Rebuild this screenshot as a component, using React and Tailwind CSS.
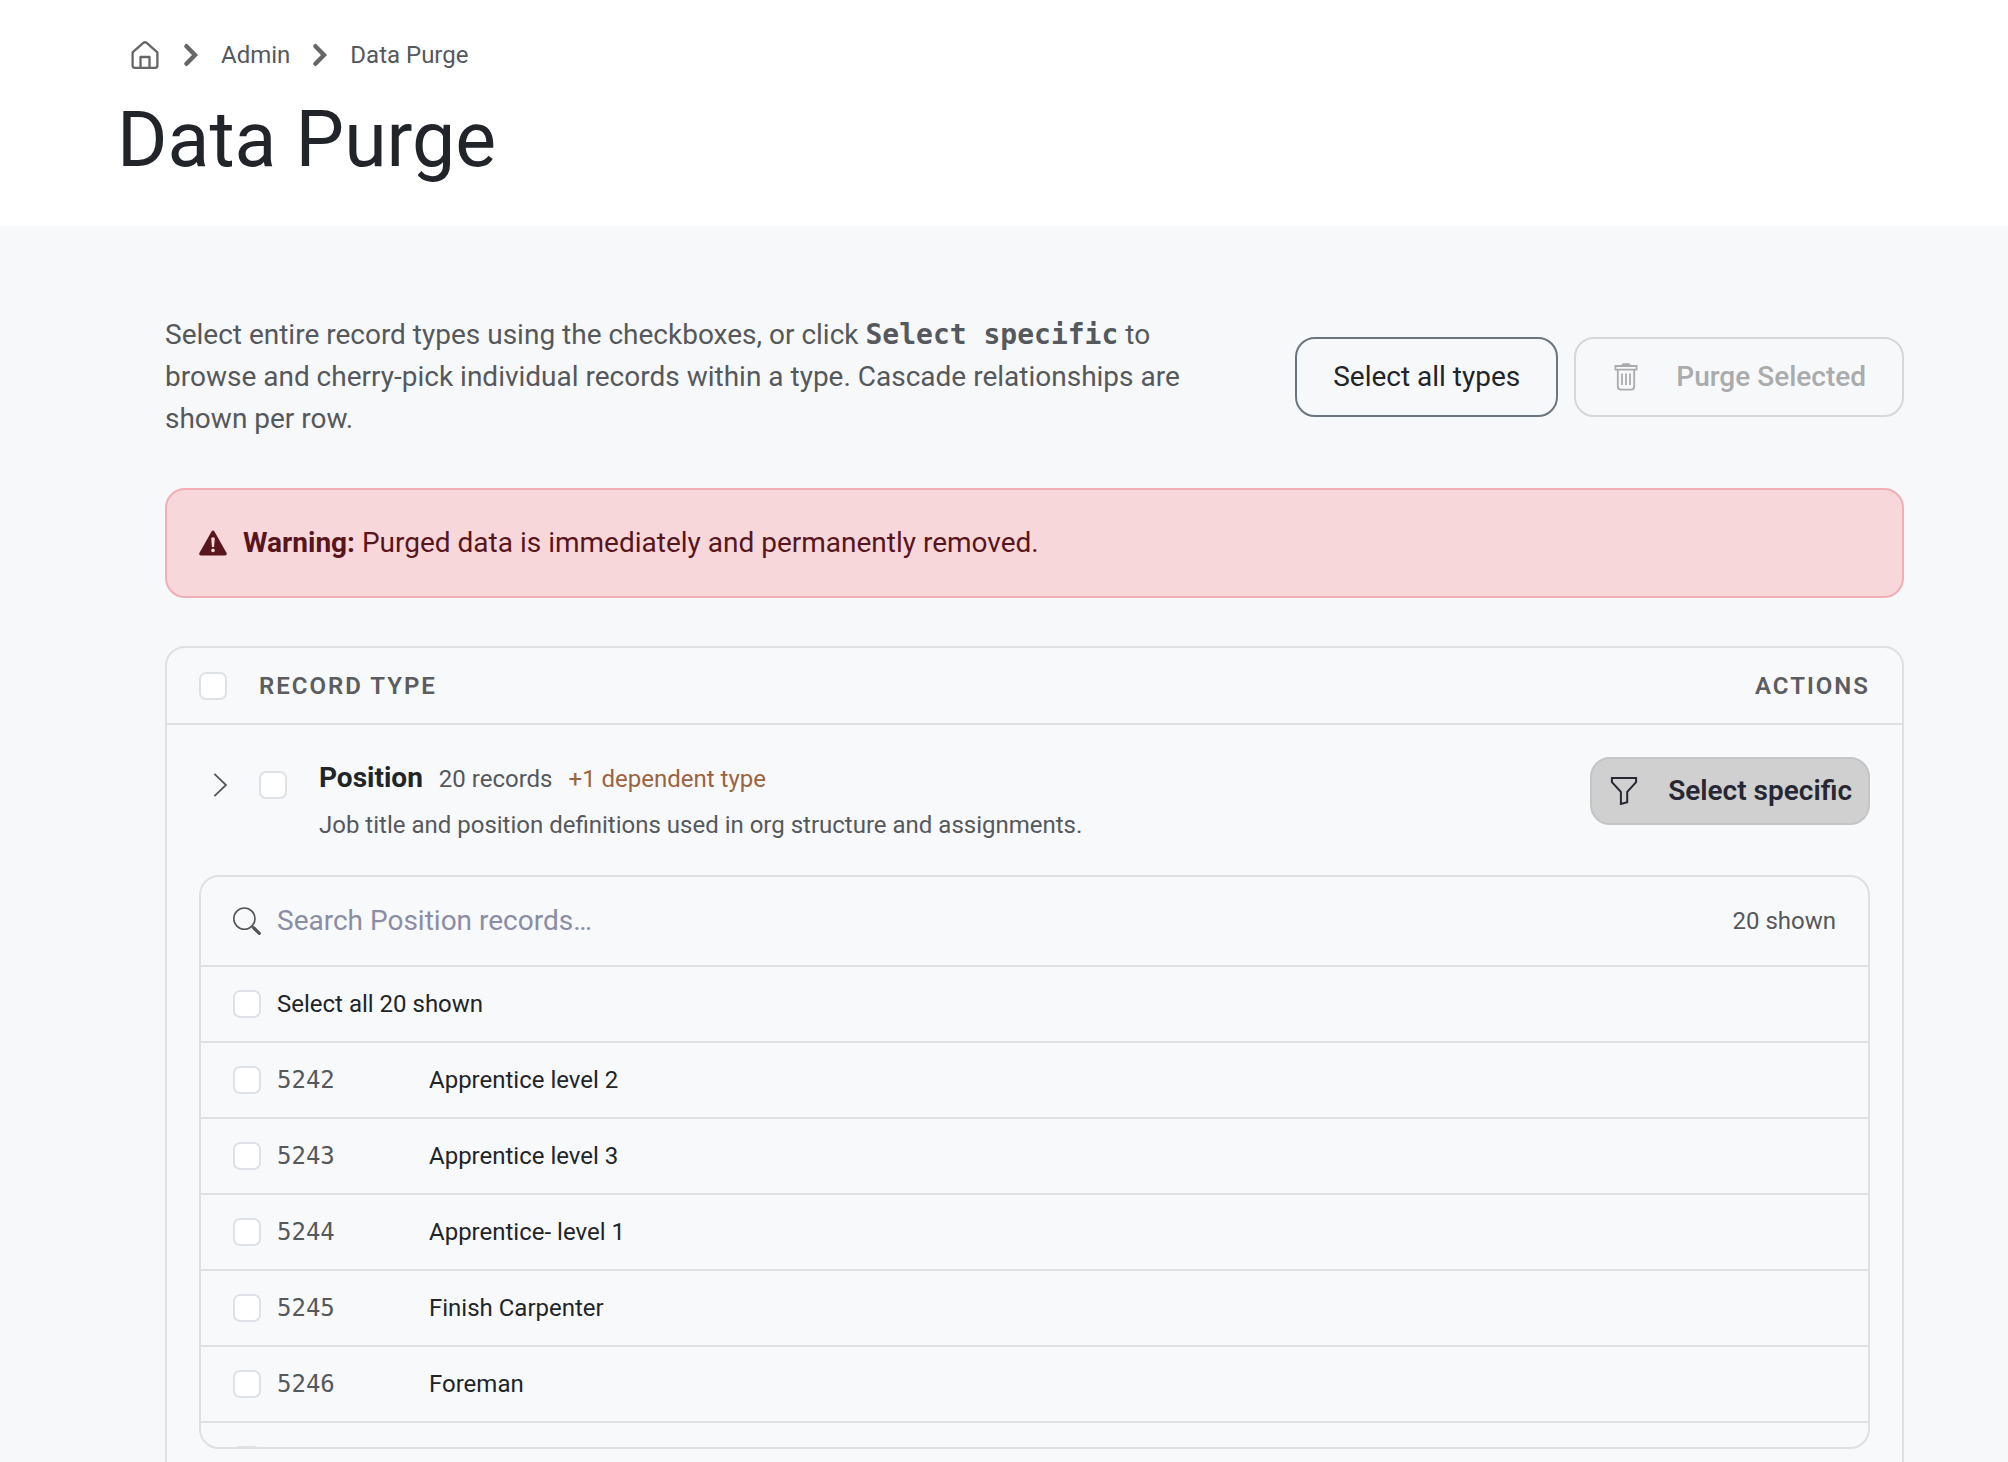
import { useState } from "react";

const records = [
  { id: 5242, name: "Apprentice level 2" },
  { id: 5243, name: "Apprentice level 3" },
  { id: 5244, name: "Apprentice- level 1" },
  { id: 5245, name: "Finish Carpenter" },
  { id: 5246, name: "Foreman" },
  { id: 5247, name: "" },
];

const HomeIcon = () => (
  <svg className="size-7" viewBox="0 0 28 28" fill="none" stroke="#666" strokeWidth="2.3" strokeLinejoin="round">
    <path d="M1.6 11.4 L12.3 1.9 Q14 0.6 15.7 1.9 L26.4 11.4 V24.6 Q26.4 26.8 24.2 26.8 H3.8 Q1.6 26.8 1.6 24.6 Z" />
    <path d="M9.5 26.8 V16 H18.5 V26.8" />
  </svg>
);

const CrumbChevron = () => (
  <svg className="h-6 w-4" viewBox="0 0 16 24" fill="none" stroke="#666" strokeWidth="4.4" strokeLinecap="round">
    <path d="M3.4 3.2 L12 12 L3.4 20.8" />
  </svg>
);

const TrashIcon = () => (
  <svg className="size-7" viewBox="0 0 28 28" fill="none" stroke="currentColor" strokeWidth="1.8">
    <path d="M3.4 3 H24.6 V6.6 H3.4 Z" />
    <path d="M10.4 2.4 Q10.4 1.2 11.6 1.2 H16.4 Q17.6 1.2 17.6 2.4" />
    <path d="M5.8 6.8 V23.6 Q5.8 26.6 8.8 26.6 H19.2 Q22.2 26.6 22.2 23.6 V6.8 M10 10.4 V22 M14 10.4 V22 M18 10.4 V22" />
  </svg>
);

const WarningIcon = () => (
  <svg className="size-7" viewBox="0 0 28 28">
    <path d="M12.4 2.8 Q14 0.4 15.6 2.8 L27.6 24 Q28.4 26.4 26 26.6 H2 Q-0.4 26.4 0.4 24 Z" fill="currentColor" />
    <path d="M12.2 9 Q14 7.4 15.8 9 L15.1 18 H12.9 Z" fill="#f8d7da" />
    <circle cx="14" cy="21.4" r="1.8" fill="#f8d7da" />
  </svg>
);

const FilterIcon = () => (
  <svg className="size-7" viewBox="0 0 28 28" fill="none" stroke="currentColor" strokeWidth="2">
    <path d="M1.9 1 H26.1 V5.2 L17.2 14.8 V25.2 L10.9 27 V14.8 L1.9 5.2 Z" />
  </svg>
);

const SearchIcon = () => (
  <svg className="size-7 shrink-0" viewBox="0 0 28 28" fill="none" stroke="#555" strokeLinecap="round">
    <circle cx="11.4" cy="11.6" r="10.6" strokeWidth="1.6" />
    <path d="M19.2 19.4 L20.6 20.8" strokeWidth="2" />
    <path d="M20.8 21 L26.3 26.4" strokeWidth="3.2" />
  </svg>
);

const Checkbox = ({ label, id }) => (
  <input
    id={id}
    type="checkbox"
    aria-label={label}
    className="block size-7 shrink-0 appearance-none rounded-[7px] border-2 border-[#dee2e6] bg-white checked:bg-[#495057]"
  />
);

export default function App() {
  const [query, setQuery] = useState("");
  const shown = records.filter((r) => r.name.toLowerCase().includes(query.toLowerCase()));

  return (
    <div className="min-h-screen bg-[#f7f8fa] font-[Roboto,sans-serif] text-[28px] leading-[42px] text-[#212529]">
      <header className="bg-white pt-9 pr-26 pb-10 pl-[117px]">
        <nav aria-label="Breadcrumb" className="flex h-[38px] items-center pl-[14px] text-2xl text-[#55585c]">
          <a href="#home" aria-label="Home"><HomeIcon /></a>
          <span className="pr-[22px] pl-6"><CrumbChevron /></span>
          <a href="#admin">Admin</a>
          <span className="pr-[22px] pl-[22px]"><CrumbChevron /></span>
          <span>Data Purge</span>
        </nav>
        <h1 className="mt-5 text-[77px] leading-[92px]">Data Purge</h1>
      </header>

      <main className="pt-[88px] pr-26 pl-[165px]">
        <div className="flex items-center justify-between">
          <p className="max-w-[1040px] text-[#55585c]">
            Select entire record types using the checkboxes, or click{" "}
            <strong className="font-['DejaVu_Sans_Mono',monospace] leading-none">Select specific</strong> to browse and
            cherry-pick individual records within a type. Cascade relationships are shown per row.
          </p>
          <div className="flex shrink-0 gap-4">
            <button type="button" className="h-20 rounded-[20px] border-2 border-[#6c757d] px-9">
              Select all types
            </button>
            <button
              type="button"
              disabled
              className="flex h-20 items-center gap-9 rounded-[20px] border-2 border-[#d5d7d9] px-9 font-medium text-[#a9abad]"
            >
              <TrashIcon />
              Purge Selected
            </button>
          </div>
        </div>

        <div
          role="alert"
          className="mt-12 flex h-[110px] items-center gap-4 rounded-[20px] border-2 border-[#f1aeb5] bg-[#f8d7da] px-8 text-[#58151c]"
        >
          <WarningIcon />
          <p>
            <strong>Warning:</strong> Purged data is immediately and permanently removed.
          </p>
        </div>

        <section className="mt-12 rounded-[20px] border-2 border-[#dee0e3] bg-[#f8f9fb]">
          <table className="w-full border-collapse">
            <thead>
              <tr className="h-[76px] border-b-2 border-[#dee0e3] text-2xl tracking-[2px] text-[#5b5d60]">
                <th className="pl-8 text-left font-semibold">
                  <div className="flex items-center gap-8">
                    <Checkbox label="Select all record types" />
                    RECORD TYPE
                  </div>
                </th>
                <th className="pr-8 text-right font-semibold">ACTIONS</th>
              </tr>
            </thead>
            <tbody>
              <tr>
                <td className="pt-8 pl-8">
                  <div className="flex items-start">
                    <button type="button" aria-label="Expand Position" className="mt-3.5 flex h-7 w-7 justify-end">
                      <svg className="h-7 w-4" viewBox="0 0 16 28" fill="none" stroke="#555" strokeWidth="1.8">
                        <path d="M3.4 2.8 L15 14 L3.4 25.2" />
                      </svg>
                    </button>
                    <span className="mx-8 mt-3.5"><Checkbox id="type-position" label="Position" /></span>
                    <div>
                      <div className="flex items-baseline gap-4 text-2xl">
                        <label htmlFor="type-position" className="text-[28px] leading-[42px] font-bold">Position</label>
                        <span className="text-[#55585c]">20 records</span>
                        <span className="text-[#9b6340]">+1 dependent type</span>
                      </div>
                      <p className="mt-2 text-2xl leading-9 text-[#55585c]">
                        Job title and position definitions used in org structure and assignments.
                      </p>
                    </div>
                  </div>
                </td>
                <td className="pt-8 pr-8 align-top">
                  <button
                    type="button"
                    className="ml-auto flex h-[68px] items-center gap-[30px] rounded-[20px] border-2 border-[#c4c5c6] bg-[#d0d0d0] pr-4 pl-[18px] font-semibold text-[#272733]"
                  >
                    <FilterIcon />
                    Select specific
                  </button>
                </td>
              </tr>
              <tr>
                <td colSpan={2} className="p-8">
                  <div className="overflow-hidden rounded-[20px] border-2 border-[#dee0e3]">
                    <div className="flex h-[90px] items-center gap-4 border-b-2 border-[#dee0e3] px-8">
                      <SearchIcon />
                      <input
                        type="text"
                        aria-label="Search Position records"
                        placeholder="Search Position records…"
                        value={query}
                        onChange={(e) => setQuery(e.target.value)}
                        className="min-w-0 grow bg-transparent outline-none placeholder:text-[#8b8da5]"
                      />
                      <span className="text-2xl text-[#55585c]">20 shown</span>
                    </div>
                    <div className="max-h-[480px] overflow-hidden text-2xl">
                      <div className="flex h-[76px] items-center gap-4 border-b-2 border-[#dee0e3] px-8">
                        <Checkbox id="select-shown" />
                        <label htmlFor="select-shown">Select all 20 shown</label>
                      </div>
                      {shown.map((r) => (
                        <div key={r.id} className="flex h-[76px] items-center gap-4 border-b-2 border-[#dee0e3] px-8">
                          <Checkbox id={`record-${r.id}`} />
                          <label htmlFor={`record-${r.id}`} className="flex items-baseline gap-4">
                            <span className="w-34 font-['DejaVu_Sans_Mono',monospace] text-[#55585c]">{r.id}</span>
                            <span>{r.name}</span>
                          </label>
                        </div>
                      ))}
                    </div>
                  </div>
                </td>
              </tr>
            </tbody>
          </table>
        </section>
      </main>
    </div>
  );
}
